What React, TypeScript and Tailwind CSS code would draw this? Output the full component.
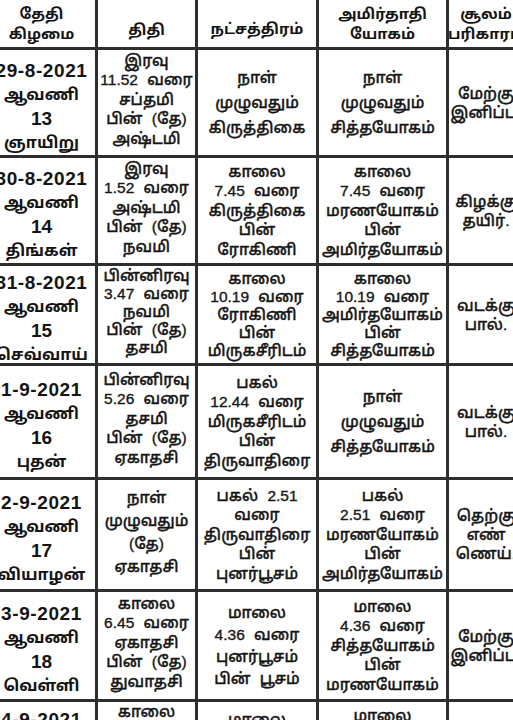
import React from "react";

type Row = {
  c1: string[];
  c2: string[];
  c3: string[];
  c4: string[];
  c5: string[];
  l2?: string;
  l3?: string;
  l4?: string;
  l5?: string;
};

const rows: Row[] = [
  {
    c1: ["29-8-2021", "ஆவணி", "13", "ஞாயிறு"],
    c2: ["இரவு", "11.52 வரை", "சப்தமி", "பின் (தே)", "அஷ்டமி"],
    c3: ["நாள்", "முழுவதும்", "கிருத்திகை"],
    c4: ["நாள்", "முழுவதும்", "சித்தயோகம்"],
    c5: ["மேற்கு", "இனிப்பு."],
    l3: "leading-[25px]",
    l4: "leading-[25px]",
  },
  {
    c1: ["30-8-2021", "ஆவணி", "14", "திங்கள்"],
    c2: ["இரவு", "1.52 வரை", "அஷ்டமி", "பின் (தே)", "நவமி"],
    c3: ["காலை", "7.45 வரை", "கிருத்திகை", "பின்", "ரோகிணி"],
    c4: ["காலை", "7.45 வரை", "மரணயோகம்", "பின்", "அமிர்தயோகம்"],
    c5: ["கிழக்கு", "தயிர்."],
  },
  {
    c1: ["31-8-2021", "ஆவணி", "15", "செவ்வாய்"],
    c2: ["பின்னிரவு", "3.47 வரை", "நவமி", "பின் (தே)", "தசமி"],
    c3: ["காலை", "10.19 வரை", "ரோகிணி", "பின்", "மிருகசீரிடம்"],
    c4: ["காலை", "10.19 வரை", "அமிர்தயோகம்", "பின்", "சித்தயோகம்"],
    c5: ["வடக்கு", "பால்."],
    l2: "leading-[18px]",
    l3: "leading-[18px]",
    l4: "leading-[18px]",
  },
  {
    c1: ["1-9-2021", "ஆவணி", "16", "புதன்"],
    c2: ["பின்னிரவு", "5.26 வரை", "தசமி", "பின் (தே)", "ஏகாதசி"],
    c3: ["பகல்", "12.44 வரை", "மிருகசீரிடம்", "பின்", "திருவாதிரை"],
    c4: ["நாள்", "முழுவதும்", "சித்தயோகம்"],
    c5: ["வடக்கு", "பால்."],
    l4: "leading-[25px]",
  },
  {
    c1: ["2-9-2021", "ஆவணி", "17", "வியாழன்"],
    c2: ["நாள்", "முழுவதும்", "(தே)", "ஏகாதசி"],
    c3: ["பகல் 2.51", "வரை", "திருவாதிரை", "பின்", "புனர்பூசம்"],
    c4: ["பகல்", "2.51 வரை", "மரணயோகம்", "பின்", "அமிர்தயோகம்"],
    c5: ["தெற்கு", "எண்", "ணெய்."],
    l2: "leading-[23px]",
  },
  {
    c1: ["3-9-2021", "ஆவணி", "18", "வெள்ளி"],
    c2: ["காலை", "6.45 வரை", "ஏகாதசி", "பின் (தே)", "துவாதசி"],
    c3: ["மாலை", "4.36 வரை", "புனர்பூசம்", "பின் பூசம்"],
    c4: ["மாலை", "4.36 வரை", "சித்தயோகம்", "பின்", "மரணயோகம்"],
    c5: ["மேற்கு", "இனிப்பு."],
    l3: "leading-[22px]",
  },
];

const font = "font-['Liberation_Sans','Noto_Sans_Tamil','Noto_Sans',sans-serif]";

function Lines({ lines, cls }: { lines: string[]; cls: string }) {
  return (
    <div className={`flex flex-col items-center text-center ${cls}`}>
      {lines.map((l, i) => (
        <div key={i} className="whitespace-nowrap [word-spacing:5px]">
          {l}
        </div>
      ))}
    </div>
  );
}

export default function App() {
  const cell = "bg-white flex flex-col items-center justify-center overflow-hidden";
  const body = "text-[15.5px] font-medium text-[#161616] [-webkit-text-stroke:0.35px_#161616]";
  const head = "text-[15px] font-bold leading-[20px] text-[#141414]";
  return (
    <div className={`w-[513px] h-[720px] overflow-hidden bg-white ${font}`}>
      <div className="ml-[-12px] w-max grid grid-cols-[107px_97px_118px_127px_74px] grid-rows-[47px_105px_105px_97px_111px_109px_107px_110px] gap-[3px] bg-[#2e2e2e]">
        {/* header */}
        <div className={cell}>
          <Lines lines={["தேதி", "கிழமை"]} cls={head} />
        </div>
        <div className={`${cell} pt-[12px]`}>
          <Lines lines={["திதி"]} cls={head} />
        </div>
        <div className={`${cell} pt-[10px]`}>
          <Lines lines={["நட்சத்திரம்"]} cls={head} />
        </div>
        <div className={cell}>
          <Lines lines={["அமிர்தாதி", "யோகம்"]} cls={head} />
        </div>
        <div className={cell}>
          <Lines lines={["சூலம்", "பரிகாரம்"]} cls={head} />
        </div>

        {rows.map((r, i) => (
          <React.Fragment key={i}>
            <div className={`${cell} pt-[8px]`}>
              <div className="flex flex-col items-center text-center leading-[24px] text-[#141414]">
                <div className="whitespace-nowrap text-[19px] font-bold tracking-[0.6px]">{r.c1[0]}</div>
                <div className="whitespace-nowrap text-[16px] font-bold">{r.c1[1]}</div>
                <div className="whitespace-nowrap text-[19px] font-bold">{r.c1[2]}</div>
                <div className="whitespace-nowrap text-[16px] font-bold">{r.c1[3]}</div>
              </div>
            </div>
            <div className={`${cell} pb-[6px]`}>
              <Lines lines={r.c2} cls={`${body} ${r.l2 ?? "leading-[19.5px]"}`} />
            </div>
            <div className={cell}>
              <Lines lines={r.c3} cls={`${body} ${r.l3 ?? "leading-[19.5px]"}`} />
            </div>
            <div className={cell}>
              <Lines lines={r.c4} cls={`${body} ${r.l4 ?? "leading-[19.5px]"}`} />
            </div>
            <div className={cell}>
              <Lines lines={r.c5} cls={`${body} ${r.l5 ?? "leading-[19px]"}`} />
            </div>
          </React.Fragment>
        ))}

        {/* last, partly visible row */}
        <div className="bg-white flex flex-col items-center pt-[6px] overflow-hidden">
          <div className="whitespace-nowrap text-[19px] font-bold tracking-[0.6px] leading-[24px] text-[#141414]">4-9-2021</div>
        </div>
        <div className="bg-white flex flex-col items-center overflow-hidden">
          <Lines lines={["காலை", "8.59 வரை", "துவாதசி"]} cls={`${body} leading-[19.5px]`} />
        </div>
        <div className="bg-white flex flex-col items-center pt-[8px] overflow-hidden">
          <Lines lines={["மாலை", "6.02 வரை", "பூசம்"]} cls={`${body} leading-[19.5px]`} />
        </div>
        <div className="bg-white flex flex-col items-center pt-[4px] overflow-hidden">
          <Lines lines={["மாலை", "6.02 வரை", "மரணயோகம்"]} cls={`${body} leading-[19.5px]`} />
        </div>
        <div className="bg-white" />
      </div>
    </div>
  );
}
